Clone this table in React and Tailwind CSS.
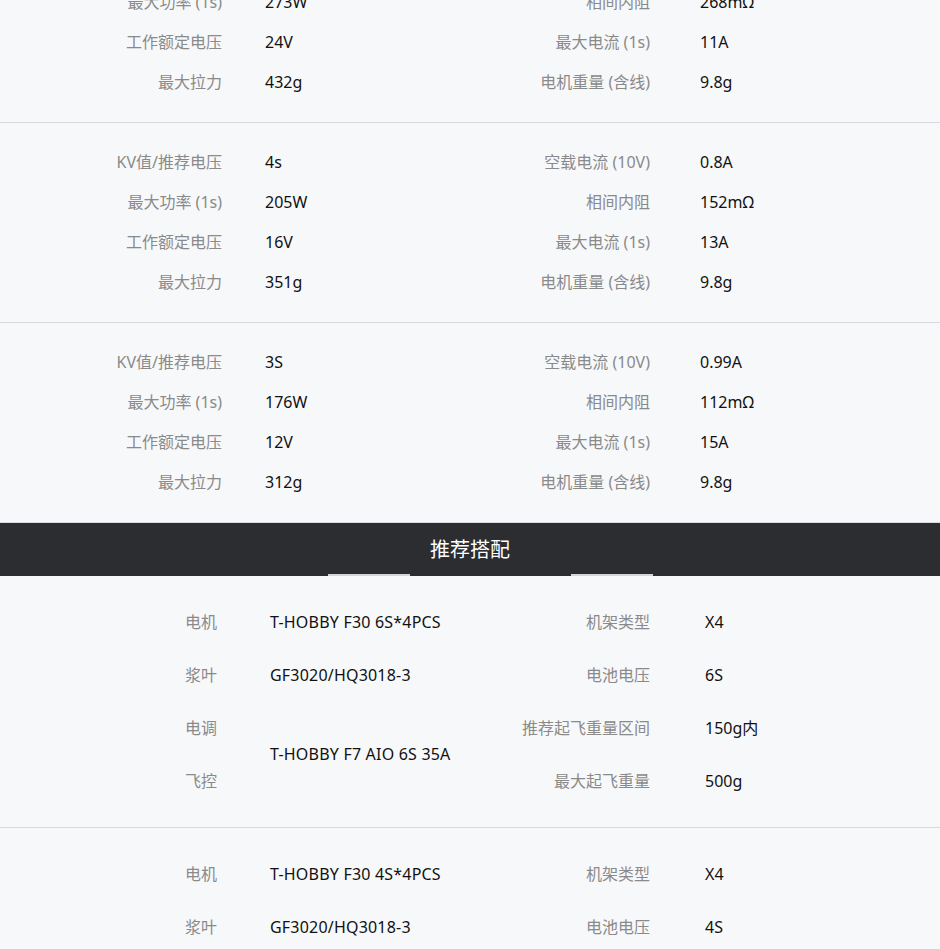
import React from 'react';

const specs = [
  [
    ['KV值/推荐电压', '6S', '空载电流 (10V)', '0.7A'],
    ['最大功率 (1s)', '273W', '相间内阻', '268mΩ'],
    ['工作额定电压', '24V', '最大电流 (1s)', '11A'],
    ['最大拉力', '432g', '电机重量 (含线)', '9.8g'],
  ],
  [
    ['KV值/推荐电压', '4s', '空载电流 (10V)', '0.8A'],
    ['最大功率 (1s)', '205W', '相间内阻', '152mΩ'],
    ['工作额定电压', '16V', '最大电流 (1s)', '13A'],
    ['最大拉力', '351g', '电机重量 (含线)', '9.8g'],
  ],
  [
    ['KV值/推荐电压', '3S', '空载电流 (10V)', '0.99A'],
    ['最大功率 (1s)', '176W', '相间内阻', '112mΩ'],
    ['工作额定电压', '12V', '最大电流 (1s)', '15A'],
    ['最大拉力', '312g', '电机重量 (含线)', '9.8g'],
  ],
];

const combos = [
  { motor: 'T-HOBBY F30 6S*4PCS', battery: '6S', range: '150g内', max: '500g' },
  { motor: 'T-HOBBY F30 4S*4PCS', battery: '4S', range: '120g内', max: '400g' },
];

const font = { fontFamily: '"Noto Sans", "Noto Sans CJK SC", sans-serif' };

const SpecBlock = ({ rows }) => (
  <div className="pt-[19px] pb-5 border-b border-[#d9dadd]">
    {rows.map((r, i) => (
      <div key={i} className="grid grid-cols-[222px_248px_180px_1fr] h-10 items-center text-base">
        <div className="text-right text-[#8a8a8a]">{r[0]}</div>
        <div className="pl-[43px] text-[#111]">{r[1]}</div>
        <div className="text-right text-[#8a8a8a]">{r[2]}</div>
        <div className="pl-[50px] text-[#111]">{r[3]}</div>
      </div>
    ))}
  </div>
);

const ComboBlock = ({ c }) => (
  <div className="pt-[19px] pb-5 border-b border-[#d9dadd]">
    <div className="grid grid-cols-[217px_253px_180px_1fr] auto-rows-[53px] items-center text-base">
      <div className="text-right text-[#8a8a8a]">电机</div>
      <div className="pl-[53px] text-[#111] tracking-[0.2px]">{c.motor}</div>
      <div className="text-right text-[#8a8a8a]">机架类型</div>
      <div className="pl-[55px] text-[#111]">X4</div>

      <div className="text-right text-[#8a8a8a]">浆叶</div>
      <div className="pl-[53px] text-[#111] tracking-[0.2px]">GF3020/HQ3018-3</div>
      <div className="text-right text-[#8a8a8a]">电池电压</div>
      <div className="pl-[55px] text-[#111]">{c.battery}</div>

      <div className="text-right text-[#8a8a8a]">电调</div>
      <div className="row-span-2 self-center pl-[53px] text-[#111] tracking-[0.2px]">T-HOBBY F7 AIO 6S 35A</div>
      <div className="text-right text-[#8a8a8a]">推荐起飞重量区间</div>
      <div className="pl-[55px] text-[#111]">{c.range}</div>

      <div className="text-right text-[#8a8a8a]">飞控</div>
      <div className="text-right text-[#8a8a8a]">最大起飞重量</div>
      <div className="pl-[55px] text-[#111]">{c.max}</div>
    </div>
  </div>
);

export default function App() {
  return (
    <div className="w-[940px] bg-[#f7f8fa] overflow-hidden" style={font}>
      <div className="-mt-[77px]">
        {specs.map((rows, i) => (
          <SpecBlock key={i} rows={rows} />
        ))}
      </div>

      {/* recommended combo header */}
      <div className="bg-[#2b2d31] h-[53px] flex flex-col pt-[2px]">
        <div className="flex-1 flex items-center justify-center text-white text-[20px]">推荐搭配</div>
        <div className="flex gap-[161px] ml-[328px] h-[2px]">
          <div className="w-[82px] bg-[#d4d5d8]" />
          <div className="w-[82px] bg-[#d4d5d8]" />
        </div>
      </div>

      {combos.map((c, i) => (
        <ComboBlock key={i} c={c} />
      ))}
    </div>
  );
}
